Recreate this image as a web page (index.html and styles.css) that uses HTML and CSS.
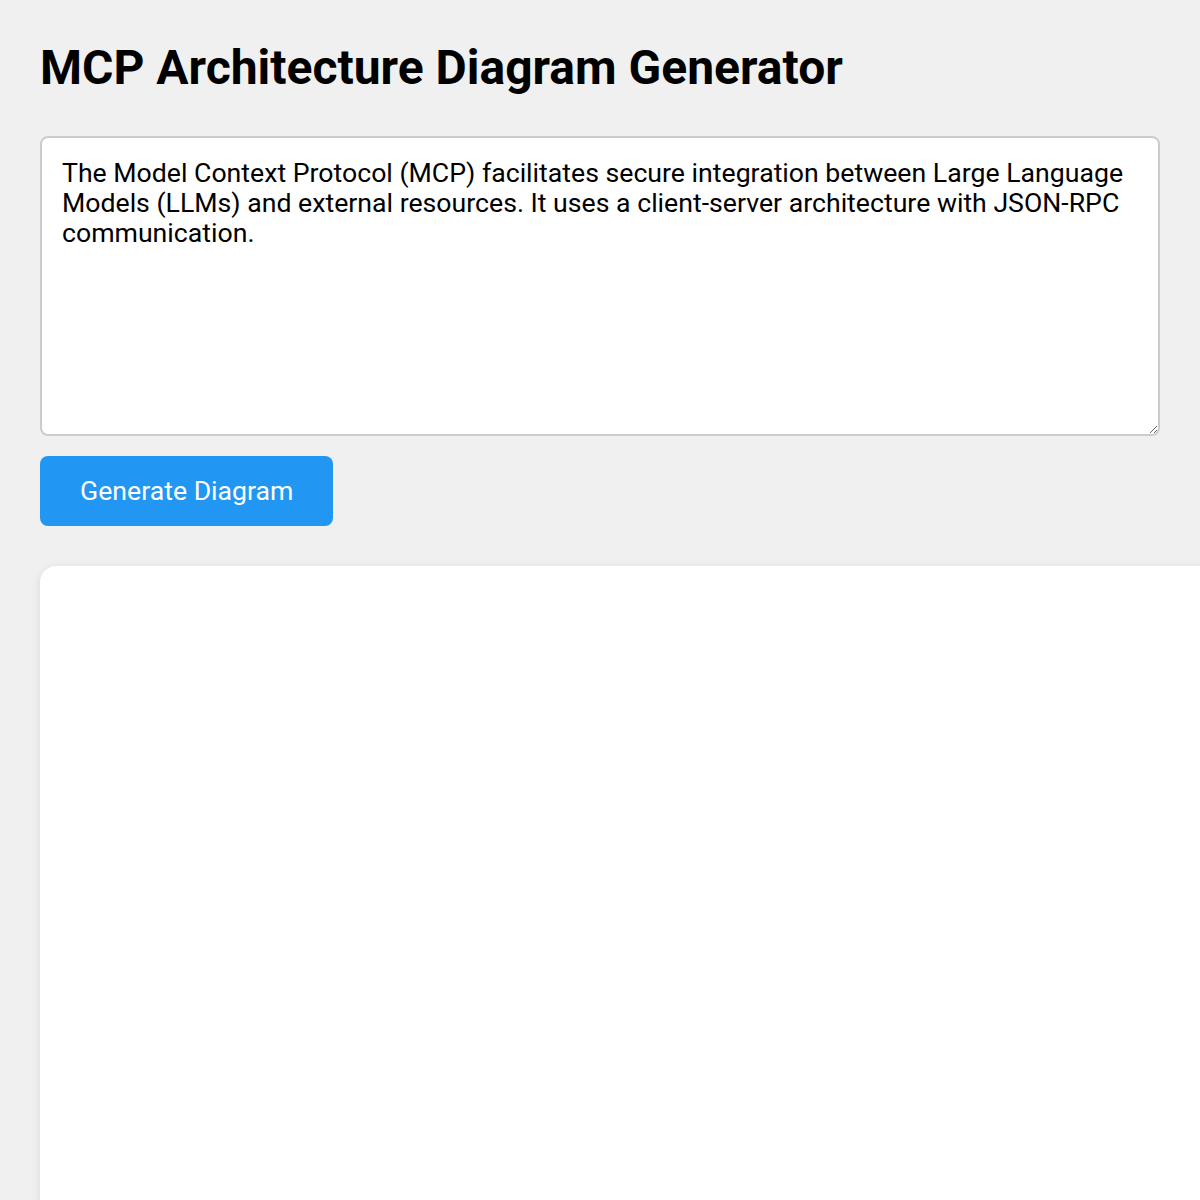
FILE: index.html
```html
<!doctype html>
<html>
	<head>
		<meta charset="utf-8" />
		<meta name="viewport" content="width=device-width, initial-scale=1" />
		<title>MCP Architecture Diagram Generator</title>
		<link rel="stylesheet" href="styles.css">
	</head>
	<body>
		<h1>MCP Architecture Diagram Generator</h1>

		<textarea id="description">The Model Context Protocol (MCP) facilitates secure integration between Large Language Models (LLMs) and external resources. It uses a client-server architecture with JSON-RPC communication.</textarea>

		<button id="generate">Generate Diagram</button>

		<div id="diagram" class="diagram"></div>
	</body>
</html>
```

FILE: styles.css
```css
body {
	font-family: Roboto, "Liberation Sans", sans-serif;
	background-color: #f0f0f0;
	margin: 0;
	padding: 40px;
}
h1 {
	font-size: 48px;
	line-height: 56px;
	font-weight: bold;
	margin: 0 0 40px 0;
	color: #000;
}
/* the editor is sized at 3/4 and zoomed up, so its grip scales with it */
textarea {
	zoom: 1.33334;
	display: block;
	box-sizing: border-box;
	width: 840px;
	height: 225px;
	padding: 15px;
	font-family: Roboto, "Liberation Sans", sans-serif;
	font-size: 20px;
	line-height: 22.5px;
	color: #000;
	background-color: #fff;
	border: 1.5px solid #ccc;
	border-radius: 6px;
	margin: 0 0 15px 0;
}
button {
	display: block;
	padding: 20px 40px;
	font-family: Roboto, "Liberation Sans", sans-serif;
	font-size: 26.67px;
	line-height: 30px;
	color: #fff;
	background-color: #2196F3;
	border: none;
	border-radius: 8px;
	cursor: pointer;
	margin: 0 0 40px 0;
}
button:hover {
	filter: brightness(90%);
}
div.diagram {
	width: 1200px;
	height: 800px;
	background-color: #fff;
	border-radius: 16px;
	box-shadow: 0 2px 10px rgba(0, 0, 0, .1);
}
```
